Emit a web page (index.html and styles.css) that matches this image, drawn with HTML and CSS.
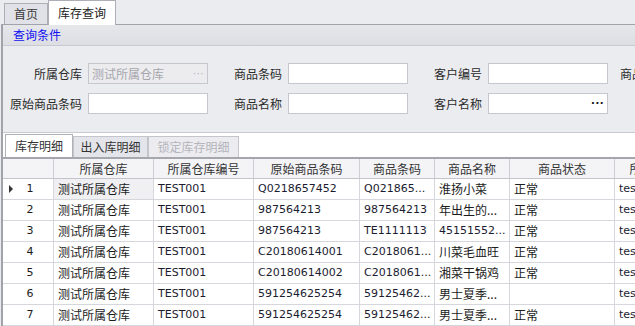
FILE: index.html
```html
<!DOCTYPE html>
<html lang="zh-CN">
<head>
    <meta charset="UTF-8">
    <title>库存查询</title>
    <link rel="stylesheet" href="styles.css">
</head>
<body>
    <!-- Document Tabs -->
    <div class="doc-tabs">
        <div class="doc-tab">首页</div>
        <div class="doc-tab active">库存查询</div>
    </div>

    <div class="page">
        <!-- Query Conditions -->
        <div class="group-head">查询条件</div>
        <div class="query">
            <label class="lbl">所属仓库</label>
            <div class="field disabled"><span>测试所属仓库</span><span class="dots">···</span></div>
            <label class="lbl">商品条码</label>
            <div class="field"></div>
            <label class="lbl">客户编号</label>
            <div class="field"></div>
            <label class="lbl lbl-last">商品状态</label>

            <label class="lbl">原始商品条码</label>
            <div class="field"></div>
            <label class="lbl">商品名称</label>
            <div class="field"></div>
            <label class="lbl">客户名称</label>
            <div class="field"><span></span><span class="dots dark">···</span></div>
        </div>

        <!-- Detail -->
        <div class="detail">
            <div class="sub-tabs">
                <div class="sub-tab active w1">库存明细</div>
                <div class="sub-tab w2">出入库明细</div>
                <div class="sub-tab off w3">锁定库存明细</div>
            </div>
            <table class="grid">
                <colgroup>
                    <col style="width:51px">
                    <col style="width:100px">
                    <col style="width:100px">
                    <col style="width:106px">
                    <col style="width:75px">
                    <col style="width:75px">
                    <col style="width:105px">
                    <col style="width:78px">
                </colgroup>
                <thead>
                    <tr>
                        <th></th>
                        <th>所属仓库</th>
                        <th>所属仓库编号</th>
                        <th>原始商品条码</th>
                        <th>商品条码</th>
                        <th>商品名称</th>
                        <th>商品状态</th>
                        <th>所属客户</th>
                    </tr>
                </thead>
                <tbody>
                    <tr>
                        <td class="ind"><div><i class="cur"></i><span>1</span></div></td>
                        <td class="focus">测试所属仓库</td>
                        <td class="num">TEST001</td>
                        <td class="num">Q0218657452</td>
                        <td class="num">Q021865...</td>
                        <td>淮扬小菜</td>
                        <td>正常</td>
                        <td class="num">test001</td>
                    </tr>
                    <tr>
                        <td class="ind"><div><i></i><span>2</span></div></td>
                        <td>测试所属仓库</td>
                        <td class="num">TEST001</td>
                        <td class="num">987564213</td>
                        <td class="num">987564213</td>
                        <td>年出生的...</td>
                        <td>正常</td>
                        <td class="num">test001</td>
                    </tr>
                    <tr>
                        <td class="ind"><div><i></i><span>3</span></div></td>
                        <td>测试所属仓库</td>
                        <td class="num">TEST001</td>
                        <td class="num">987564213</td>
                        <td class="num">TE1111113</td>
                        <td class="num">45151552...</td>
                        <td>正常</td>
                        <td class="num">test001</td>
                    </tr>
                    <tr>
                        <td class="ind"><div><i></i><span>4</span></div></td>
                        <td>测试所属仓库</td>
                        <td class="num">TEST001</td>
                        <td class="num">C20180614001</td>
                        <td class="num">C2018061...</td>
                        <td>川菜毛血旺</td>
                        <td>正常</td>
                        <td class="num">test001</td>
                    </tr>
                    <tr>
                        <td class="ind"><div><i></i><span>5</span></div></td>
                        <td>测试所属仓库</td>
                        <td class="num">TEST001</td>
                        <td class="num">C20180614002</td>
                        <td class="num">C2018061...</td>
                        <td>湘菜干锅鸡</td>
                        <td>正常</td>
                        <td class="num">test001</td>
                    </tr>
                    <tr>
                        <td class="ind"><div><i></i><span>6</span></div></td>
                        <td>测试所属仓库</td>
                        <td class="num">TEST001</td>
                        <td class="num">591254625254</td>
                        <td class="num">59125462...</td>
                        <td>男士夏季...</td>
                        <td></td>
                        <td class="num">test001</td>
                    </tr>
                    <tr>
                        <td class="ind"><div><i></i><span>7</span></div></td>
                        <td>测试所属仓库</td>
                        <td class="num">TEST001</td>
                        <td class="num">591254625254</td>
                        <td class="num">59125462...</td>
                        <td>男士夏季...</td>
                        <td>正常</td>
                        <td class="num">test001</td>
                    </tr>
                </tbody>
            </table>
        </div>
    </div>
</body>
</html>
```

FILE: styles.css
```css
body {
    margin: 0;
    width: 635px;
    height: 326px;
    overflow: hidden;
    background-color: #ebecf0;
    font-family: 'Noto Sans CJK SC', sans-serif;
    font-size: 12px;
    color: #2a2a2a;
}

/* Document Tabs */
.doc-tabs {
    display: flex;
    align-items: flex-end;
    height: 24px;
    padding-left: 4px;
}

.doc-tab {
    height: 20px;
    line-height: 20px;
    padding: 0 9px;
    background-color: #e1e2e7;
    border: 1px solid #aeaeb6;
    border-bottom: none;
    color: #3a3a3a;
}

.doc-tab.active {
    position: relative;
    z-index: 1;
    height: 24px;
    line-height: 24px;
    margin-bottom: -1px;
    padding: 0 9px;
    background-color: #fff;
    color: #222;
}

/* Page */
.page {
    margin-left: 1px;
    border-top: 1px solid #a2a2aa;
    border-left: 2px solid #a2a2aa;
}

.group-head {
    height: 20px;
    line-height: 20px;
    padding-left: 10px;
    background: linear-gradient(to bottom, #e6e7eb, #dddee3);
    border-bottom: 1px solid #cacbd2;
    color: #1010f0;
}

.query {
    display: grid;
    grid-template-columns: 85px 120px 80px 120px 80px 120px 80px;
    grid-auto-rows: 21px;
    row-gap: 9px;
    padding: 17px 0 18px;
    border-bottom: 1px solid #c9cad1;
}

.lbl {
    padding-right: 6px;
    text-align: right;
    line-height: 21px;
    white-space: nowrap;
}

.lbl-last {
    padding: 0 0 0 12px;
    text-align: left;
}

.field {
    display: flex;
    align-items: center;
    justify-content: space-between;
    box-sizing: border-box;
    height: 21px;
    padding: 0 3px 0 3px;
    background-color: #fff;
    border: 1px solid #c6c7ce;
}

.field.disabled {
    background-color: #ececef;
    color: #a6a6ad;
}

.dots {
    font-family: 'DejaVu Sans', sans-serif;
    font-size: 10px;
    line-height: 12px;
    letter-spacing: 0.5px;
    color: #b0b0b6;
}

.dots.dark {
    color: #111;
    font-weight: bold;
}

/* Detail */
.detail {
    background-color: #fff;
}

.sub-tabs {
    display: flex;
    align-items: flex-end;
    height: 24px;
    padding-left: 2px;
}

.sub-tab {
    box-sizing: border-box;
    height: 21px;
    line-height: 20px;
    text-align: center;
    background-color: #e4e5ea;
    border: 1px solid #c4c5cc;
    border-bottom: none;
    color: #333;
}

.sub-tab.active {
    height: 23px;
    line-height: 22px;
    background-color: #fff;
    border-color: #b0b0b8;
}

.sub-tab.off {
    background-color: #ececf0;
    color: #b4b4bb;
}

.w1 { width: 68px; }
.w2 { width: 75px; }
.w3 { width: 91px; }

/* Grid */
.grid {
    table-layout: fixed;
    width: 690px;
    border-collapse: separate;
    border-spacing: 0;
    border-top: 2px solid #a6a6ae;
}

.grid th {
    height: 19px;
    padding: 0;
    line-height: 19px;
    font-weight: normal;
    color: #333;
    background-color: #f4f4f7;
    border-right: 1px solid #cdcdd4;
    border-bottom: 1px solid #c4c4cc;
    white-space: nowrap;
    overflow: hidden;
}

.grid td {
    height: 20px;
    padding: 0 0 0 4px;
    line-height: 20px;
    color: #1c1c1c;
    border-right: 1px solid #d6d6dd;
    border-bottom: 1px solid #d6d6dd;
    white-space: nowrap;
    overflow: hidden;
}

.grid td.num {
    font-family: 'DejaVu Sans', sans-serif;
    font-size: 11px;
    color: #1c1c30;
}

.grid td.focus {
    background-color: #f0f0f2;
}

.grid td.ind {
    padding: 0;
    font-family: 'DejaVu Sans', sans-serif;
    font-size: 11px;
}

.ind div {
    display: grid;
    grid-template-columns: 16px 1fr 12px;
    align-items: center;
}

.ind span {
    text-align: center;
}

.cur {
    justify-self: center;
    width: 0;
    height: 0;
    border-left: 4px solid #333;
    border-top: 4px solid transparent;
    border-bottom: 4px solid transparent;
}
```
